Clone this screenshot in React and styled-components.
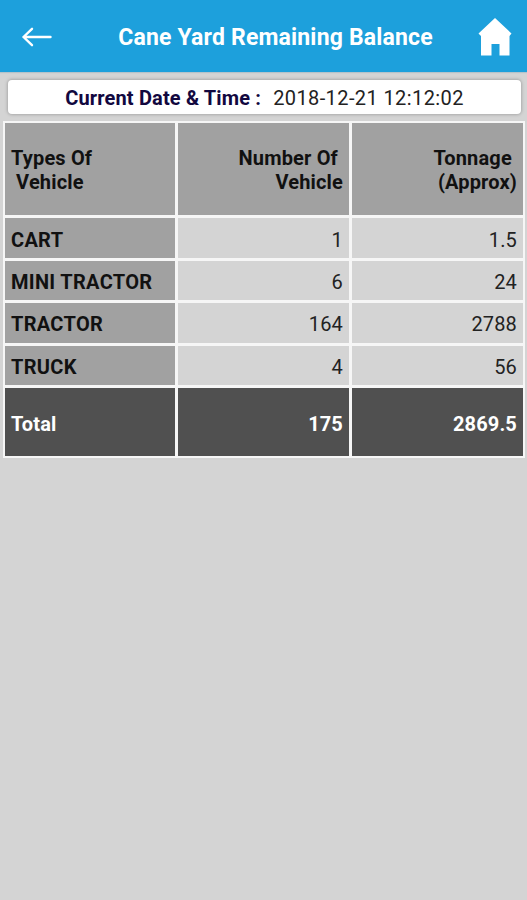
import React from 'react';
import styled, { createGlobalStyle } from 'styled-components';

const GlobalStyle = createGlobalStyle`
  * { box-sizing: border-box; }
  body {
    margin: 0;
    background: #d4d4d4;
    font-family: Roboto, "Liberation Sans", sans-serif;
  }
`;

const Screen = styled.main`
  min-height: 900px;
  background: #d4d4d4;
`;

const AppBar = styled.header`
  display: grid;
  grid-template-columns: 74px 1fr 48px;
  align-items: center;
  height: 72px;
  padding-right: 8px;
  background: #1da0dc;
  box-shadow: 0 1px 1px #b5c3ca;
`;

const IconButton = styled.button`
  display: flex;
  align-items: center;
  justify-content: center;
  height: 72px;
  padding: 1px 0 0;
  border: 0;
  background: none;
  color: #fff;
`;

const Title = styled.h1`
  margin: 3px 0 0 6px;
  color: #fff;
  font-size: 23px;
  line-height: 28px;
  font-weight: 700;
  letter-spacing: 0.17px;
  text-align: center;
  white-space: nowrap;
`;

const DateCard = styled.section`
  display: flex;
  justify-content: center;
  align-items: center;
  gap: 12px;
  height: 34px;
  margin: 8px 6px 0 8px;
  padding-top: 2px;
  border-radius: 4px;
  background: #fff;
  box-shadow: 0 0 3px 1px #aaa;
  font-size: 20px;
  line-height: 24px;
  color: #222;
  white-space: nowrap;
`;

const DateLabel = styled.span`
  font-weight: 700;
  letter-spacing: 0.15px;
  color: #12083f;
`;

const DateValue = styled.time`
  letter-spacing: 0.4px;
`;

const Table = styled.div`
  display: grid;
  grid-template-columns: 170px 171px 171px;
  grid-template-rows: 92px 40px 39px 40px 39px 68px;
  gap: 3px;
  width: 522px;
  margin: 7px 0 0 3px;
  padding: 2px;
  background: #f6f6f6;
`;

const tones = {
  label: { background: '#a1a1a1', color: '#111', weight: 700 },
  value: { background: '#d4d4d4', color: '#222', weight: 400 },
  total: { background: '#505050', color: '#fff', weight: 700 },
};

const Cell = styled.div`
  display: flex;
  align-items: center;
  justify-content: ${(p) => (p.$end ? 'flex-end' : 'flex-start')};
  padding: ${(p) => p.$top || 2}px 6px 0;
  background: ${(p) => tones[p.$tone].background};
  color: ${(p) => tones[p.$tone].color};
  font-weight: ${(p) => tones[p.$tone].weight};
  font-size: 20px;
  line-height: 24px;
  letter-spacing: ${(p) => p.$spacing || 0.15}px;
  text-align: ${(p) => (p.$end ? 'right' : 'left')};
  white-space: pre;
`;

const rows = [
  ['CART', '1', '1.5'],
  ['MINI TRACTOR', '6', '24'],
  ['TRACTOR', '164', '2788'],
  ['TRUCK', '4', '56'],
];

const BackIcon = () => (
  <svg width="32" height="22" viewBox="0 0 32 22" fill="none" stroke="currentColor" strokeWidth="2.4" strokeLinecap="round" strokeLinejoin="round">
    <path d="M29.5 11H2.5M11 2.8L2.5 11l8.5 8.2" />
  </svg>
);

const HomeIcon = () => (
  <svg width="34" height="38" viewBox="0 0 34 38" fill="currentColor">
    <path d="M17 0L33.5 15.5L31.5 18V37.5H21.5V26H13.5V37.5H3V18L.5 15.5Z" />
  </svg>
);

export default function App() {
  return (
    <Screen>
      <GlobalStyle />
      <AppBar>
        <IconButton aria-label="Back"><BackIcon /></IconButton>
        <Title>Cane Yard Remaining Balance</Title>
        <IconButton aria-label="Home"><HomeIcon /></IconButton>
      </AppBar>
      <DateCard>
        <DateLabel>Current Date &amp; Time :</DateLabel>
        <DateValue>2018-12-21 12:12:02</DateValue>
      </DateCard>
      <Table>
        <Cell $tone="label">{'Types Of\n Vehicle'}</Cell>
        <Cell $tone="label" $end>{'Number Of \nVehicle'}</Cell>
        <Cell $tone="label" $end>{'Tonnage \n(Approx)'}</Cell>
        {rows.map(([name, count, tonnage], index) => (
          <React.Fragment key={name}>
            <Cell $tone="label" $spacing={0.3} $top={index === 0 ? 4 : 2}>{name}</Cell>
            <Cell $tone="value" $end $top={index === 0 ? 4 : 2}>{count}</Cell>
            <Cell $tone="value" $end $top={index === 0 ? 4 : 2}>{tonnage}</Cell>
          </React.Fragment>
        ))}
        <Cell $tone="total" $top={4}>Total</Cell>
        <Cell $tone="total" $end $top={4}>175</Cell>
        <Cell $tone="total" $end $top={4}>2869.5</Cell>
      </Table>
    </Screen>
  );
}
